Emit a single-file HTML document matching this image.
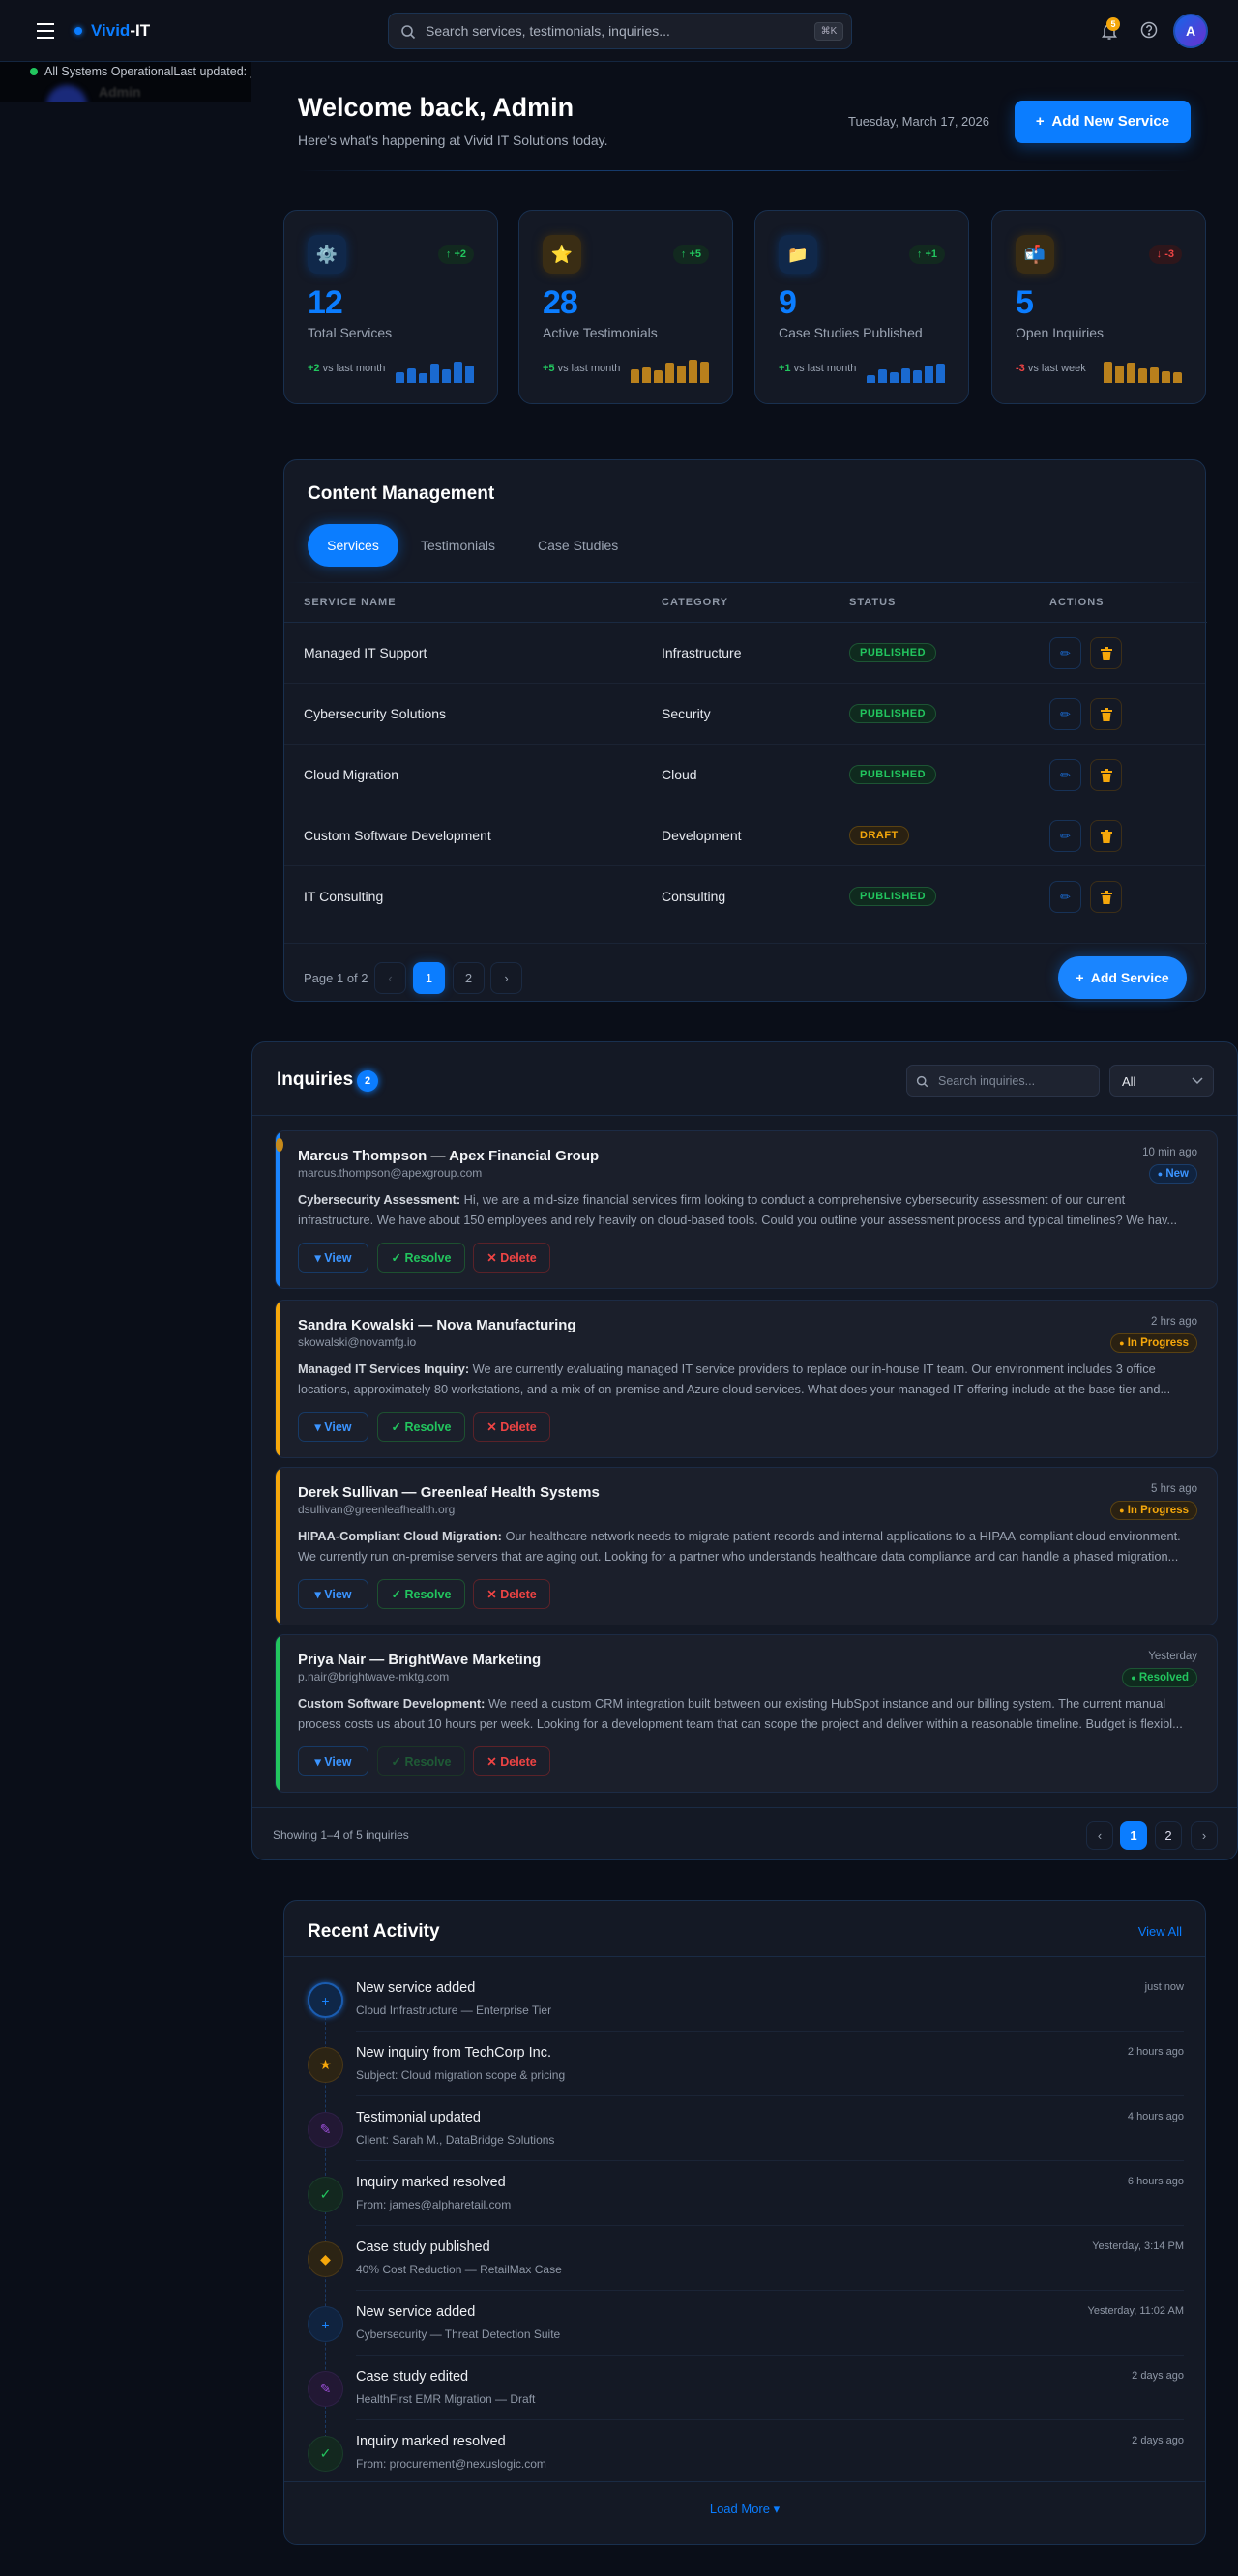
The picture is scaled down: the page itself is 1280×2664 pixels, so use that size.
<!DOCTYPE html>
<html><head><meta charset="utf-8"><style>
*{box-sizing:border-box;margin:0;padding:0}
body{width:1280px;height:2664px;background:#0a0e18;font-family:"Liberation Sans",sans-serif;color:#e6e9ef;position:relative;overflow:hidden}
.abs{position:absolute}
.hdr{left:0;top:0;width:1280px;height:64px;background:#0d111b;border-bottom:1px solid #142640}
.card{background:#141925;border:1px solid #19304f;border-radius:14px}
.stat{top:217px;width:222px;height:201px}
.ico{position:absolute;left:24px;top:25px;width:40px;height:40px;border-radius:10px;display:flex;align-items:center;justify-content:center;font-size:18px}
.chg{position:absolute;right:24px;top:35px;height:20px;padding:0 8px;border-radius:10px;font-size:11px;font-weight:bold;line-height:20px}
.num{position:absolute;left:24px;top:76px;font-size:34px;font-weight:bold;color:#0b7dff;letter-spacing:-1px}
.lbl{position:absolute;left:24px;top:118px;font-size:14px;color:#9aa3b2}
.vs{position:absolute;left:24px;top:157px;font-size:11px;color:#9aa3b2}
.bars{position:absolute;right:24px;top:154px;height:24px;display:flex;align-items:flex-end;gap:3px}
.bars i{display:block;width:9px;border-radius:2px 2px 0 0}
.pill{display:inline-block;font-size:11px;font-weight:bold;letter-spacing:.5px;padding:3px 10px;border-radius:10px}
.pub{color:#22c55e;background:#0f2a1e;border:1px solid #1d5534}
.dft{color:#f5a70b;background:#2a2112;border:1px solid #5a4212}
.ab{position:absolute;width:33px;height:33px;border-radius:8px;display:flex;align-items:center;justify-content:center;font-size:13px}
.pg{position:absolute;width:33px;height:33px;border-radius:8px;border:1px solid #1b2a42;display:flex;align-items:center;justify-content:center;font-size:13px;color:#9aa3b2}
.inq{position:absolute;left:23px;width:975px;height:164px;background:#1b1f2b;border:1px solid #1c2b45;border-radius:10px;overflow:hidden}
.inq .bd{position:absolute;left:0;top:0;bottom:0;width:4px}
.inq .nm{position:absolute;left:23px;top:17px;font-size:15px;font-weight:bold;color:#f1f3f6}
.inq .em{position:absolute;left:23px;top:36px;font-size:12px;color:#8e97a6}
.inq .tx{position:absolute;left:23px;top:60px;width:935px;font-size:12.8px;line-height:21px;color:#9aa3b2;height:42px;overflow:hidden}
.inq .tx b{color:#d3d7de}
.inq .tm{position:absolute;right:20px;top:16px;font-size:11.5px;color:#8e97a6}
.inq .st{position:absolute;right:20px;top:34px;height:20px;padding:0 8px;border-radius:10px;font-size:11.5px;font-weight:bold;line-height:19px}
.btn{position:absolute;top:115px;height:31px;border-radius:7px;font-size:12.5px;font-weight:bold;display:flex;align-items:center;justify-content:center}
.act{position:absolute;left:0;width:954px;height:67px}
.act .c{position:absolute;left:24px;top:16px;width:37px;height:37px;border-radius:50%;display:flex;align-items:center;justify-content:center;font-size:14px}
.act .t{position:absolute;left:74px;top:14px;font-size:14.5px;color:#eceef2}
.act .s{position:absolute;left:74px;top:38px;font-size:12px;color:#8e97a6}
.act .r{position:absolute;right:24px;top:15px;font-size:11px;color:#8e97a6}
.act .ln{position:absolute;left:74px;right:24px;bottom:0;height:1px;background:#1b2436}
</style></head><body>

<div class="abs hdr">
  <div class="abs" style="left:38px;top:24px;width:18px;height:2px;background:#fff;box-shadow:0 7px 0 #fff,0 14px 0 #fff"></div>
  <div class="abs" style="left:77px;top:28px;width:8px;height:8px;border-radius:50%;background:#0b7dff;box-shadow:0 0 6px #0b7dff"></div>
  <div class="abs" style="left:94px;top:22px;font-size:17px;font-weight:bold"><span style="color:#0b7dff">Vivid</span><span style="color:#fff">-IT</span></div>
  <div class="abs" style="left:401px;top:13px;width:480px;height:38px;border-radius:9px;background:#1a1e29;border:1px solid #1b3352">
    <svg class="abs" style="left:12px;top:11px" width="16" height="16" viewBox="0 0 16 16" fill="none" stroke="#9aa3b2" stroke-width="1.6"><circle cx="7" cy="7" r="5"/><path d="M11 11l3.5 3.5"/></svg>
    <div class="abs" style="left:38px;top:10px;font-size:14px;color:#a9b0bd">Search services, testimonials, inquiries...</div>
    <div class="abs" style="right:8px;top:9px;width:30px;height:19px;border-radius:4px;background:#2a2f3b;border:1px solid #3a404c;font-size:10px;color:#aab;text-align:center;line-height:17px">⌘K</div>
  </div>
  <svg class="abs" style="left:1138px;top:22px" width="18" height="20" viewBox="0 0 18 20" fill="none" stroke="#a9b0bd" stroke-width="1.5"><path d="M4 14V9a5 5 0 0110 0v5l1.5 2h-13z"/><path d="M7.5 18h3"/></svg>
  <div class="abs" style="left:1144px;top:18px;width:14px;height:14px;border-radius:50%;background:#f5a70b;color:#fff;font-size:9px;font-weight:bold;text-align:center;line-height:14px">5</div>
  <svg class="abs" style="left:1179px;top:22px" width="18" height="18" viewBox="0 0 18 18" fill="none" stroke="#a9b0bd" stroke-width="1.5"><circle cx="9" cy="9" r="7.5"/><path d="M6.8 7a2.3 2.3 0 114 1.5c-.9.7-1.8 1-1.8 2.3"/><circle cx="9" cy="13.3" r=".5" fill="#a9b0bd"/></svg>
  <div class="abs" style="left:1213px;top:14px;width:36px;height:36px;border-radius:50%;background:linear-gradient(135deg,#1565e8,#6a2fd0);border:2px solid #1d4fb0;color:#fff;font-weight:bold;font-size:14px;text-align:center;line-height:32px">A</div>
</div>

<div class="abs" style="left:0;top:64px;width:259px;height:41px;background:#04060b;overflow:hidden">
  <div class="abs" style="left:31px;top:6px;width:8px;height:8px;border-radius:50%;background:#22c55e"></div>
  <div class="abs" style="left:46px;top:3px;font-size:12.5px;color:#c4c9d2;white-space:nowrap">All Systems OperationalLast updated: just now</div>
  <div class="abs" style="left:48px;top:24px;width:42px;height:42px;border-radius:50%;background:#1a2a7a;filter:blur(3px)"></div>
  <div class="abs" style="left:102px;top:23px;font-size:14px;font-weight:bold;color:#333;filter:blur(1px)">Admin</div>
</div>

<div class="abs" style="left:308px;top:96px;font-size:27px;font-weight:bold;color:#fff">Welcome back, Admin</div>
<div class="abs" style="left:308px;top:137px;font-size:14px;color:#a3abb8">Here's what's happening at Vivid IT Solutions today.</div>
<div class="abs" style="left:877px;top:118px;font-size:13px;color:#a3abb8">Tuesday, March 17, 2026</div>
<div class="abs" style="left:1049px;top:104px;width:182px;height:44px;border-radius:8px;background:#0b7dff;box-shadow:0 4px 16px rgba(11,125,255,.35);color:#fff;font-weight:bold;font-size:15px;text-align:center;line-height:44px">+&nbsp; Add New Service</div>
<div class="abs" style="left:308px;top:176px;width:922px;height:1px;background:linear-gradient(90deg,transparent,#163a6a 20%,#163a6a 80%,transparent)"></div>

<div class="abs card stat" style="left:293px">
  <div class="ico" style="background:#10284a;box-shadow:0 0 10px #0d3160">⚙️</div>
  <div class="chg" style="background:#12291f;color:#22c55e">↑ +2</div>
  <div class="num">12</div><div class="lbl">Total Services</div>
  <div class="vs"><span style="color:#22c55e;font-weight:bold">+2</span> vs last month</div>
  <div class="bars"><i style="height:11px;background:#1a6ad0"></i><i style="height:15px;background:#1a6ad0"></i><i style="height:10px;background:#1a6ad0"></i><i style="height:20px;background:#1a6ad0"></i><i style="height:14px;background:#1a6ad0"></i><i style="height:22px;background:#1a6ad0"></i><i style="height:18px;background:#1a6ad0"></i></div>
</div>
<div class="abs card stat" style="left:536px">
  <div class="ico" style="background:#3a2d14;box-shadow:0 0 10px #3a2d14">⭐</div>
  <div class="chg" style="background:#12291f;color:#22c55e">↑ +5</div>
  <div class="num">28</div><div class="lbl">Active Testimonials</div>
  <div class="vs"><span style="color:#22c55e;font-weight:bold">+5</span> vs last month</div>
  <div class="bars"><i style="height:14px;background:#b9801c"></i><i style="height:16px;background:#b9801c"></i><i style="height:13px;background:#b9801c"></i><i style="height:21px;background:#b9801c"></i><i style="height:18px;background:#b9801c"></i><i style="height:24px;background:#b9801c"></i><i style="height:22px;background:#b9801c"></i></div>
</div>
<div class="abs card stat" style="left:780px">
  <div class="ico" style="background:#10284a;box-shadow:0 0 10px #0d3160">📁</div>
  <div class="chg" style="background:#12291f;color:#22c55e">↑ +1</div>
  <div class="num">9</div><div class="lbl">Case Studies Published</div>
  <div class="vs"><span style="color:#22c55e;font-weight:bold">+1</span> vs last month</div>
  <div class="bars"><i style="height:8px;background:#1a6ad0"></i><i style="height:14px;background:#1a6ad0"></i><i style="height:11px;background:#1a6ad0"></i><i style="height:15px;background:#1a6ad0"></i><i style="height:13px;background:#1a6ad0"></i><i style="height:18px;background:#1a6ad0"></i><i style="height:20px;background:#1a6ad0"></i></div>
</div>
<div class="abs card stat" style="left:1025px">
  <div class="ico" style="background:#3a2d14;box-shadow:0 0 10px #3a2d14">📬</div>
  <div class="chg" style="background:#2e161b;color:#ef4444">↓ -3</div>
  <div class="num">5</div><div class="lbl">Open Inquiries</div>
  <div class="vs"><span style="color:#ef4444;font-weight:bold">-3</span> vs last week</div>
  <div class="bars"><i style="height:22px;background:#b9801c"></i><i style="height:18px;background:#b9801c"></i><i style="height:21px;background:#b9801c"></i><i style="height:15px;background:#b9801c"></i><i style="height:16px;background:#b9801c"></i><i style="height:12px;background:#b9801c"></i><i style="height:11px;background:#b9801c"></i></div>
</div>

<div class="abs card" style="left:293px;top:475px;width:954px;height:561px">
  <div class="abs" style="left:24px;top:24px;font-size:19px;font-weight:bold;color:#fff">Content Management</div>
  <div class="abs" style="left:24px;top:66px;width:94px;height:44px;border-radius:22px;background:#0b7dff;box-shadow:0 0 14px rgba(11,125,255,.4);color:#fff;font-size:14px;text-align:center;line-height:44px">Services</div>
  <div class="abs" style="left:141px;top:80px;font-size:14px;color:#9aa3b2">Testimonials</div>
  <div class="abs" style="left:262px;top:80px;font-size:14px;color:#9aa3b2">Case Studies</div>
  <div class="abs" style="left:0;top:126px;width:954px;height:1px;background:linear-gradient(90deg,transparent,#183256 15%,#183256 85%,transparent)"></div>
  <div class="abs" style="left:20px;top:141px;font-size:11px;letter-spacing:1px;color:#8e97a6;font-weight:bold">SERVICE NAME</div>
  <div class="abs" style="left:390px;top:141px;font-size:11px;letter-spacing:1px;color:#8e97a6;font-weight:bold">CATEGORY</div>
  <div class="abs" style="left:584px;top:141px;font-size:11px;letter-spacing:1px;color:#8e97a6;font-weight:bold">STATUS</div>
  <div class="abs" style="left:791px;top:141px;font-size:11px;letter-spacing:1px;color:#8e97a6;font-weight:bold">ACTIONS</div>
  <div class="abs" style="left:0;top:167px;width:954px;height:1px;background:#1a2a42"></div>

  <div class="abs" style="left:0;top:168px;width:952px">
    <div style="position:relative;height:63px;border-bottom:1px solid #1b2333"><span class="abs" style="left:20px;top:23px;font-size:14px">Managed IT Support</span><span class="abs" style="left:390px;top:23px;font-size:14px">Infrastructure</span><span class="abs pill pub" style="left:584px;top:21px">PUBLISHED</span><div class="ab" style="left:791px;top:15px;border:1px solid #173257;color:#1a6ad0">✏</div><div class="ab" style="left:833px;top:15px;border:1px solid #3d2f18"><svg width="12" height="14" viewBox="0 0 12 14" fill="#f5a70b"><rect x="0" y="2" width="12" height="2"/><rect x="4" y="0" width="4" height="2"/><path d="M1.5 5h9l-1 9h-7z"/></svg></div></div>
    <div style="position:relative;height:63px;border-bottom:1px solid #1b2333"><span class="abs" style="left:20px;top:23px;font-size:14px">Cybersecurity Solutions</span><span class="abs" style="left:390px;top:23px;font-size:14px">Security</span><span class="abs pill pub" style="left:584px;top:21px">PUBLISHED</span><div class="ab" style="left:791px;top:15px;border:1px solid #173257;color:#1a6ad0">✏</div><div class="ab" style="left:833px;top:15px;border:1px solid #3d2f18"><svg width="12" height="14" viewBox="0 0 12 14" fill="#f5a70b"><rect x="0" y="2" width="12" height="2"/><rect x="4" y="0" width="4" height="2"/><path d="M1.5 5h9l-1 9h-7z"/></svg></div></div>
    <div style="position:relative;height:63px;border-bottom:1px solid #1b2333"><span class="abs" style="left:20px;top:23px;font-size:14px">Cloud Migration</span><span class="abs" style="left:390px;top:23px;font-size:14px">Cloud</span><span class="abs pill pub" style="left:584px;top:21px">PUBLISHED</span><div class="ab" style="left:791px;top:15px;border:1px solid #173257;color:#1a6ad0">✏</div><div class="ab" style="left:833px;top:15px;border:1px solid #3d2f18"><svg width="12" height="14" viewBox="0 0 12 14" fill="#f5a70b"><rect x="0" y="2" width="12" height="2"/><rect x="4" y="0" width="4" height="2"/><path d="M1.5 5h9l-1 9h-7z"/></svg></div></div>
    <div style="position:relative;height:63px;border-bottom:1px solid #1b2333"><span class="abs" style="left:20px;top:23px;font-size:14px">Custom Software Development</span><span class="abs" style="left:390px;top:23px;font-size:14px">Development</span><span class="abs pill dft" style="left:584px;top:21px">DRAFT</span><div class="ab" style="left:791px;top:15px;border:1px solid #173257;color:#1a6ad0">✏</div><div class="ab" style="left:833px;top:15px;border:1px solid #3d2f18"><svg width="12" height="14" viewBox="0 0 12 14" fill="#f5a70b"><rect x="0" y="2" width="12" height="2"/><rect x="4" y="0" width="4" height="2"/><path d="M1.5 5h9l-1 9h-7z"/></svg></div></div>
    <div style="position:relative;height:63px"><span class="abs" style="left:20px;top:23px;font-size:14px">IT Consulting</span><span class="abs" style="left:390px;top:23px;font-size:14px">Consulting</span><span class="abs pill pub" style="left:584px;top:21px">PUBLISHED</span><div class="ab" style="left:791px;top:15px;border:1px solid #173257;color:#1a6ad0">✏</div><div class="ab" style="left:833px;top:15px;border:1px solid #3d2f18"><svg width="12" height="14" viewBox="0 0 12 14" fill="#f5a70b"><rect x="0" y="2" width="12" height="2"/><rect x="4" y="0" width="4" height="2"/><path d="M1.5 5h9l-1 9h-7z"/></svg></div></div>
  </div>
  <div class="abs" style="left:0;top:499px;width:954px;height:1px;background:#1a2436"></div>
  <div class="abs" style="left:20px;top:528px;font-size:13px;color:#9aa3b2">Page 1 of 2</div>
  <div class="pg" style="left:93px;top:519px;color:#444c5a">‹</div>
  <div class="pg" style="left:133px;top:519px;background:#0b7dff;border-color:#0b7dff;color:#fff;box-shadow:0 0 10px rgba(11,125,255,.4)">1</div>
  <div class="pg" style="left:174px;top:519px">2</div>
  <div class="pg" style="left:213px;top:519px">›</div>
  <div class="abs" style="left:800px;top:513px;width:133px;height:44px;border-radius:22px;background:#1a85ff;box-shadow:0 0 14px rgba(11,125,255,.4);color:#fff;font-weight:bold;font-size:14px;text-align:center;line-height:44px">+&nbsp; Add Service</div>
</div>

<div class="abs" style="left:260px;top:1077px;width:1020px;height:847px;background:#141925;border:1px solid #19304f;border-radius:14px">
  <div class="abs" style="left:25px;top:28px;font-size:19px;font-weight:bold;color:#fff">Inquiries</div>
  <div class="abs" style="left:108px;top:29px;width:22px;height:22px;border-radius:50%;background:#0b7dff;color:#fff;font-size:11px;font-weight:bold;text-align:center;line-height:22px;box-shadow:0 0 8px #0b7dff">2</div>
  <div class="abs" style="left:676px;top:23px;width:200px;height:33px;border-radius:7px;background:#1e2330;border:1px solid #2a3347">
    <svg class="abs" style="left:9px;top:10px" width="13" height="13" viewBox="0 0 16 16" fill="none" stroke="#9aa3b2" stroke-width="1.8"><circle cx="7" cy="7" r="5"/><path d="M11 11l3.5 3.5"/></svg>
    <div class="abs" style="left:32px;top:9px;font-size:12.5px;color:#7e8796">Search inquiries...</div>
  </div>
  <div class="abs" style="left:886px;top:23px;width:108px;height:33px;border-radius:7px;background:#1e2330;border:1px solid #2a3347">
    <div class="abs" style="left:12px;top:9px;font-size:13px;color:#e6e9ef">All</div>
    <svg class="abs" style="right:10px;top:12px" width="12" height="8" viewBox="0 0 12 8" fill="none" stroke="#9aa3b2" stroke-width="1.5"><path d="M1 1l5 5 5-5"/></svg>
  </div>
  <div class="abs" style="left:0;top:75px;width:1018px;height:1px;background:#1a2b45"></div>

  <div class="inq" style="top:91px"><div class="bd" style="background:#1a85ff"></div><div class="abs" style="left:0;top:7px;width:8px;height:14px;border-radius:50%;background:#c78a1a"></div>
    <div class="nm">Marcus Thompson — Apex Financial Group</div><div class="em">marcus.thompson@apexgroup.com</div>
    <div class="tm">10 min ago</div><div class="st" style="background:#10233f;border:1px solid #1b3d6a;color:#3b94ff"><span style="font-size:9px">●</span> New</div>
    <div class="tx"><b>Cybersecurity Assessment:</b> Hi, we are a mid-size financial services firm looking to conduct a comprehensive cybersecurity assessment of our current infrastructure. We have about 150 employees and rely heavily on cloud-based tools. Could you outline your assessment process and typical timelines? We hav...</div>
    <div class="btn" style="left:23px;width:73px;border:1px solid #173a66;color:#3b94ff">▾ View</div><div class="btn" style="left:105px;width:91px;border:1px solid #1d5130;color:#22c55e">✓ Resolve</div><div class="btn" style="left:204px;width:80px;border:1px solid #5a2229;color:#ef4444">✕ Delete</div>
  </div>
  <div class="inq" style="top:266px"><div class="bd" style="background:#f5a70b"></div>
    <div class="nm">Sandra Kowalski — Nova Manufacturing</div><div class="em">skowalski@novamfg.io</div>
    <div class="tm">2 hrs ago</div><div class="st" style="background:#2a2112;border:1px solid #5a4212;color:#f5a70b"><span style="font-size:9px">●</span> In Progress</div>
    <div class="tx"><b>Managed IT Services Inquiry:</b> We are currently evaluating managed IT service providers to replace our in-house IT team. Our environment includes 3 office locations, approximately 80 workstations, and a mix of on-premise and Azure cloud services. What does your managed IT offering include at the base tier and...</div>
    <div class="btn" style="left:23px;width:73px;border:1px solid #173a66;color:#3b94ff">▾ View</div><div class="btn" style="left:105px;width:91px;border:1px solid #1d5130;color:#22c55e">✓ Resolve</div><div class="btn" style="left:204px;width:80px;border:1px solid #5a2229;color:#ef4444">✕ Delete</div>
  </div>
  <div class="inq" style="top:439px"><div class="bd" style="background:#f5a70b"></div>
    <div class="nm">Derek Sullivan — Greenleaf Health Systems</div><div class="em">dsullivan@greenleafhealth.org</div>
    <div class="tm">5 hrs ago</div><div class="st" style="background:#2a2112;border:1px solid #5a4212;color:#f5a70b"><span style="font-size:9px">●</span> In Progress</div>
    <div class="tx"><b>HIPAA-Compliant Cloud Migration:</b> Our healthcare network needs to migrate patient records and internal applications to a HIPAA-compliant cloud environment. We currently run on-premise servers that are aging out. Looking for a partner who understands healthcare data compliance and can handle a phased migration...</div>
    <div class="btn" style="left:23px;width:73px;border:1px solid #173a66;color:#3b94ff">▾ View</div><div class="btn" style="left:105px;width:91px;border:1px solid #1d5130;color:#22c55e">✓ Resolve</div><div class="btn" style="left:204px;width:80px;border:1px solid #5a2229;color:#ef4444">✕ Delete</div>
  </div>
  <div class="inq" style="top:612px"><div class="bd" style="background:#22c55e"></div>
    <div class="nm">Priya Nair — BrightWave Marketing</div><div class="em">p.nair@brightwave-mktg.com</div>
    <div class="tm">Yesterday</div><div class="st" style="background:#0f2a1e;border:1px solid #1d5534;color:#22c55e"><span style="font-size:9px">●</span> Resolved</div>
    <div class="tx"><b>Custom Software Development:</b> We need a custom CRM integration built between our existing HubSpot instance and our billing system. The current manual process costs us about 10 hours per week. Looking for a development team that can scope the project and deliver within a reasonable timeline. Budget is flexibl...</div>
    <div class="btn" style="left:23px;width:73px;border:1px solid #173a66;color:#3b94ff">▾ View</div><div class="btn" style="left:105px;width:91px;border:1px solid #1b3527;color:#1f5a36">✓ Resolve</div><div class="btn" style="left:204px;width:80px;border:1px solid #5a2229;color:#ef4444">✕ Delete</div>
  </div>
  <div class="abs" style="left:0;top:791px;width:1018px;height:1px;background:#1a2b45"></div>
  <div class="abs" style="left:21px;top:813px;font-size:12px;color:#9aa3b2">Showing 1–4 of 5 inquiries</div>
  <div class="pg" style="left:862px;top:805px;width:28px;height:30px">‹</div>
  <div class="pg" style="left:897px;top:805px;width:28px;height:30px;background:#0b7dff;border-color:#0b7dff;color:#fff;font-weight:bold">1</div>
  <div class="pg" style="left:933px;top:805px;width:28px;height:30px;color:#dde">2</div>
  <div class="pg" style="left:970px;top:805px;width:28px;height:30px">›</div>
</div>

<div class="abs card" style="left:293px;top:1965px;width:954px;height:667px">
  <div class="abs" style="left:24px;top:21px;font-size:19px;font-weight:bold;color:#fff">Recent Activity</div>
  <div class="abs" style="right:24px;top:24px;font-size:13px;color:#0b7dff">View All</div>
  <div class="abs" style="left:0;top:57px;width:952px;height:1px;background:#1a2b45"></div>
  <div class="abs" style="left:42px;top:90px;width:0;height:470px;border-left:1px dashed #1b3a66"></div>
  <div class="abs" style="left:0;top:68px;width:952px">
    <div class="act" style="position:relative"><div class="c" style="background:#0f2748;border:2px solid #1a5cb0;box-shadow:0 0 6px #1a5cb0;color:#1a85ff">+</div><div class="t">New service added</div><div class="s">Cloud Infrastructure — Enterprise Tier</div><div class="r">just now</div><div class="ln"></div></div>
    <div class="act" style="position:relative"><div class="c" style="background:#2c2414;border:1px solid #4a3818;color:#f5a70b">★</div><div class="t">New inquiry from TechCorp Inc.</div><div class="s">Subject: Cloud migration scope &amp; pricing</div><div class="r">2 hours ago</div><div class="ln"></div></div>
    <div class="act" style="position:relative"><div class="c" style="background:#221834;border:1px solid #2e2046;color:#9a4fd6">✎</div><div class="t">Testimonial updated</div><div class="s">Client: Sarah M., DataBridge Solutions</div><div class="r">4 hours ago</div><div class="ln"></div></div>
    <div class="act" style="position:relative"><div class="c" style="background:#13281f;border:1px solid #1a3b2b;color:#22c55e">✓</div><div class="t">Inquiry marked resolved</div><div class="s">From: james@alpharetail.com</div><div class="r">6 hours ago</div><div class="ln"></div></div>
    <div class="act" style="position:relative"><div class="c" style="background:#2c2414;border:1px solid #4a3818;color:#f5a70b">◆</div><div class="t">Case study published</div><div class="s">40% Cost Reduction — RetailMax Case</div><div class="r">Yesterday, 3:14 PM</div><div class="ln"></div></div>
    <div class="act" style="position:relative"><div class="c" style="background:#10233f;border:1px solid #173257;color:#1a85ff">+</div><div class="t">New service added</div><div class="s">Cybersecurity — Threat Detection Suite</div><div class="r">Yesterday, 11:02 AM</div><div class="ln"></div></div>
    <div class="act" style="position:relative"><div class="c" style="background:#221834;border:1px solid #2e2046;color:#9a4fd6">✎</div><div class="t">Case study edited</div><div class="s">HealthFirst EMR Migration — Draft</div><div class="r">2 days ago</div><div class="ln"></div></div>
    <div class="act" style="position:relative"><div class="c" style="background:#13281f;border:1px solid #1a3b2b;color:#22c55e">✓</div><div class="t">Inquiry marked resolved</div><div class="s">From: procurement@nexuslogic.com</div><div class="r">2 days ago</div></div>
  </div>
  <div class="abs" style="left:0;top:600px;width:952px;height:1px;background:#1a2b45"></div>
  <div class="abs" style="left:0;top:621px;width:952px;text-align:center;font-size:13px;color:#0b7dff">Load More ▾</div>
</div>
</body></html>
